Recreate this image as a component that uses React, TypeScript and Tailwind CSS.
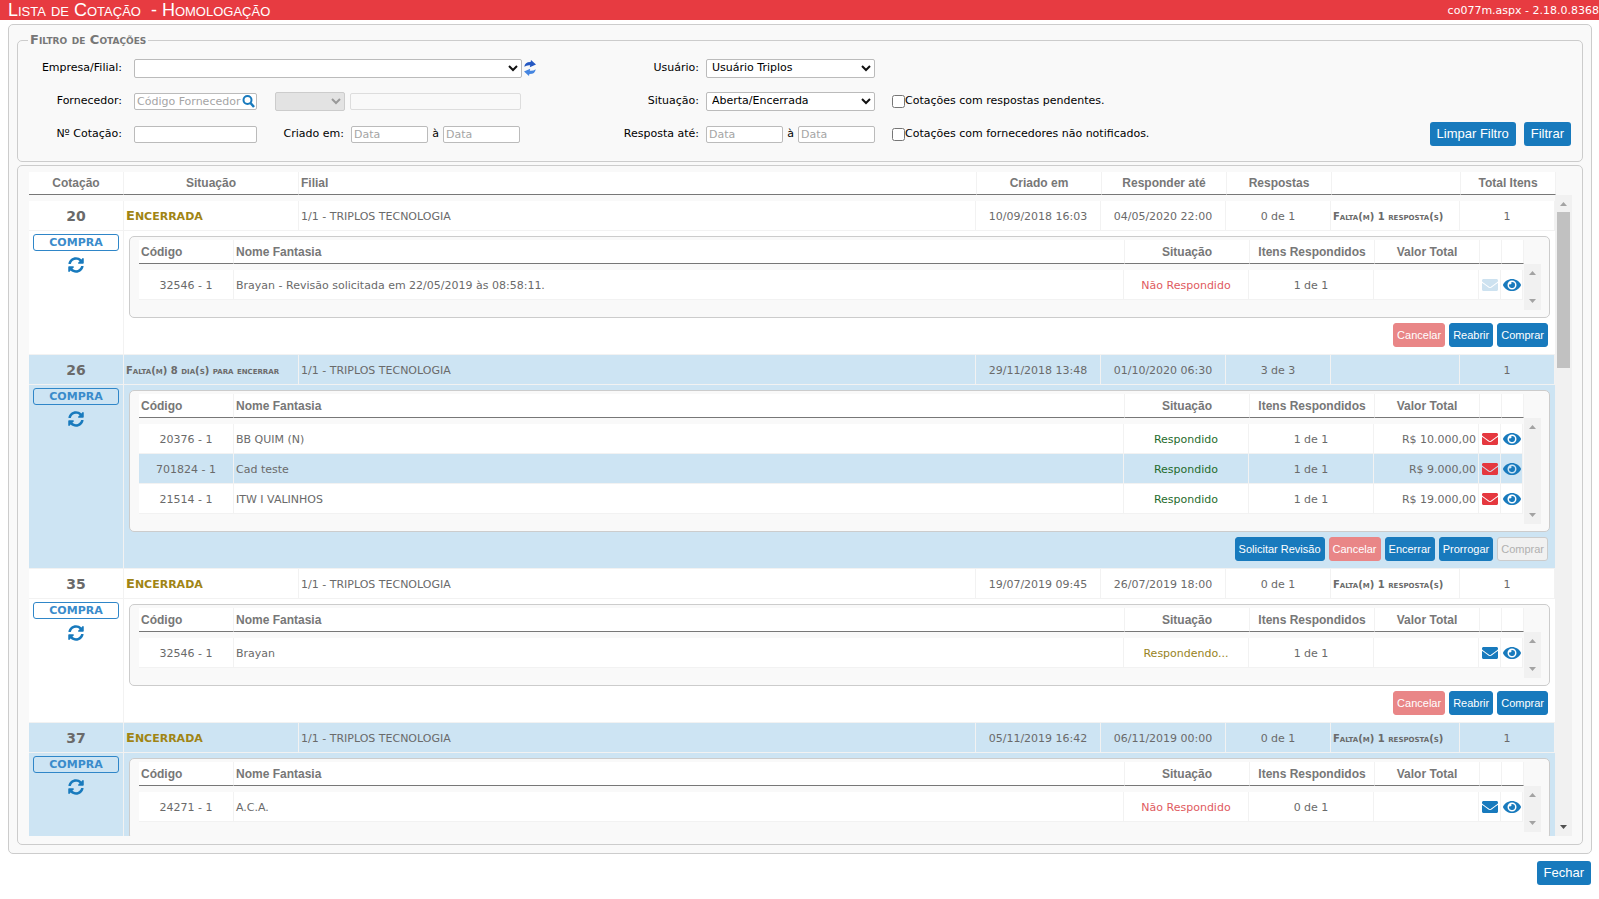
import { useState } from "react"
import type { ReactNode } from "react"
import { FaEnvelope, FaEye, FaSyncAlt } from "react-icons/fa"

type Tone = "primary" | "danger" | "disabled"

interface Fornecedor {
  codigo: string
  nome: string
  situacao: "Não Respondido" | "Respondido" | "Respondendo..."
  itens: string
  valor?: string
  email: "off" | "sent" | "ready"
}

interface Cotacao {
  id: number
  situacao: string
  criado: string
  responder: string
  respostas: string
  falta?: string
  fornecedores: Fornecedor[]
  acoes: { label: string; tone: Tone }[]
}

const acoesEncerrada: Cotacao["acoes"] = [
  { label: "Cancelar", tone: "danger" },
  { label: "Reabrir", tone: "primary" },
  { label: "Comprar", tone: "primary" },
]

const cotacoes: Cotacao[] = [
  {
    id: 20,
    situacao: "Encerrada",
    criado: "10/09/2018 16:03",
    responder: "04/05/2020 22:00",
    respostas: "0 de 1",
    falta: "Falta(m) 1 resposta(s)",
    fornecedores: [
      {
        codigo: "32546 - 1",
        nome: "Brayan - Revisão solicitada em 22/05/2019 às 08:58:11.",
        situacao: "Não Respondido",
        itens: "1 de 1",
        email: "off",
      },
    ],
    acoes: acoesEncerrada,
  },
  {
    id: 26,
    situacao: "Falta(m) 8 dia(s) para encerrar",
    criado: "29/11/2018 13:48",
    responder: "01/10/2020 06:30",
    respostas: "3 de 3",
    fornecedores: [
      { codigo: "20376 - 1", nome: "BB QUIM (N)", situacao: "Respondido", itens: "1 de 1", valor: "R$ 10.000,00", email: "sent" },
      { codigo: "701824 - 1", nome: "Cad teste", situacao: "Respondido", itens: "1 de 1", valor: "R$ 9.000,00", email: "sent" },
      { codigo: "21514 - 1", nome: "ITW I VALINHOS", situacao: "Respondido", itens: "1 de 1", valor: "R$ 19.000,00", email: "sent" },
    ],
    acoes: [
      { label: "Solicitar Revisão", tone: "primary" },
      { label: "Cancelar", tone: "danger" },
      { label: "Encerrar", tone: "primary" },
      { label: "Prorrogar", tone: "primary" },
      { label: "Comprar", tone: "disabled" },
    ],
  },
  {
    id: 35,
    situacao: "Encerrada",
    criado: "19/07/2019 09:45",
    responder: "26/07/2019 18:00",
    respostas: "0 de 1",
    falta: "Falta(m) 1 resposta(s)",
    fornecedores: [
      { codigo: "32546 - 1", nome: "Brayan", situacao: "Respondendo...", itens: "1 de 1", email: "ready" },
    ],
    acoes: acoesEncerrada,
  },
  {
    id: 37,
    situacao: "Encerrada",
    criado: "05/11/2019 16:42",
    responder: "06/11/2019 00:00",
    respostas: "0 de 1",
    falta: "Falta(m) 1 resposta(s)",
    fornecedores: [
      { codigo: "24271 - 1", nome: "A.C.A.", situacao: "Não Respondido", itens: "0 de 1", email: "ready" },
    ],
    acoes: [],
  },
]

const toneClass: Record<Tone, string> = {
  primary: "border-[#187abd] bg-[#187abd] text-white",
  danger: "border-[#e98687] bg-[#e98687] text-white",
  disabled: "border-[#cccccc] bg-[#f1f1f1] text-[#b0b0b0]",
}

const situacaoClass: Record<Fornecedor["situacao"], string> = {
  "Não Respondido": "text-[#e05a60]",
  Respondido: "text-[#1f6b2c]",
  "Respondendo...": "text-[#988323]",
}

const emailClass: Record<Fornecedor["email"], string> = {
  off: "text-[#cde2f0]",
  sent: "text-[#e5383f]",
  ready: "text-[#187abd]",
}

const arial = "font-['Liberation_Sans',Arial,sans-serif]"
const field = "h-[17px] rounded-xs border border-[#bbbbbb] bg-white px-0.5 text-[11px] text-black placeholder:text-[#a5a5a5]"
const label = "pr-3 text-right"

function ReloadArrows() {
  return (
    <svg viewBox="0 0 12 16" className="h-4 w-3" fill="#2458c2" aria-hidden="true">
      <path d="M0.3 6.8 Q0.8 1.8 6.6 1.9 L7 0 L12 4.4 L5.8 7.2 L6.2 5.2 Q2.8 4.8 0.3 6.8z" />
      <path d="M11.7 9.2 Q11.2 14.2 5.4 14.1 L5 16 L0 11.6 L6.2 8.8 L5.8 10.8 Q9.2 11.2 11.7 9.2z" fill="#4585e0" />
    </svg>
  )
}

function Arrow({ down = false, dark = false }: { down?: boolean; dark?: boolean }) {
  return (
    <svg viewBox="0 0 7 4" className="h-1 w-[7px]" fill={dark ? "#505050" : "#a3a3a3"} aria-hidden="true">
      <path d={down ? "M0 0h7L3.5 4z" : "M0 4h7L3.5 0z"} />
    </svg>
  )
}

function Select({ id, className, disabled, children }: { id: string; className: string; disabled?: boolean; children?: ReactNode }) {
  return (
    <div className={`relative ${className}`}>
      <select
        id={id}
        disabled={disabled}
        aria-label={id}
        className={`block h-[19px] w-full appearance-none rounded-xs border pl-[5px] text-[11px] ${
          disabled ? "border-[#cccccc] bg-[#e3e3e3]" : "border-[#bbbbbb] bg-white text-black"
        }`}
      >
        {children}
      </select>
      <svg viewBox="0 0 10 7" className="pointer-events-none absolute top-1.5 right-1 h-[7px] w-2.5" aria-hidden="true">
        <path d="M1 1 L5 5 L9 1" fill="none" stroke={disabled ? "#999999" : "#111111"} strokeWidth="2" />
      </svg>
    </div>
  )
}

function SmallButton({ label, tone }: { label: string; tone: Tone }) {
  return (
    <button disabled={tone === "disabled"} className={`h-6 rounded-[3px] border px-[3px] text-[11px] ${arial} ${toneClass[tone]}`}>
      {label}
    </button>
  )
}

function BigButton({ children }: { children: ReactNode }) {
  return <button className={`h-6 rounded-[3px] bg-[#187abd] px-[7px] text-[13px] text-white ${arial}`}>{children}</button>
}

const th = "border-r border-r-[#f2f2f2] border-b border-b-[#777777] bg-white"
const cell = "border-r border-b border-[#f2f2f2]"

function FornecedorCols() {
  return (
    <colgroup>
      <col className="w-[95px]" />
      <col />
      <col className="w-[125px]" />
      <col className="w-[125px]" />
      <col className="w-[105px]" />
      <col className="w-[22px]" />
      <col className="w-[22px]" />
    </colgroup>
  )
}

function Fornecedores({ rows }: { rows: Fornecedor[] }) {
  return (
    <div className="mx-[5px] mt-[5px] rounded-[5px] border border-[#cccccc] bg-[#f9f9f9] pt-[3px] pr-2 pb-[7px] pl-[9px]">
      <div className="pr-[17px]">
        <table className="w-full table-fixed border-separate border-spacing-0">
          <FornecedorCols />
          <thead>
            <tr className={`h-6 text-xs text-[#777777] ${arial}`}>
              <th className={`${th} pl-0.5 text-left`}>Código</th>
              <th className={`${th} pl-0.5 text-left`}>Nome Fantasia</th>
              <th className={th}>Situação</th>
              <th className={th}>Itens Respondidos</th>
              <th className={th}>Valor Total</th>
              <th className={th}></th>
              <th className={th}></th>
            </tr>
          </thead>
        </table>
      </div>
      <div className="flex">
        <div className="min-w-0 flex-1 pt-1.5 pr-px pb-2.5">
          <table className="w-full table-fixed border-separate border-spacing-0">
            <FornecedorCols />
            <tbody>
              {rows.map((f, i) => (
                <tr key={f.codigo} className={`h-[30px] ${i % 2 ? "bg-[#cde4f3]" : "bg-white"}`}>
                  <td className={`${cell} pt-0.5 text-center`}>{f.codigo}</td>
                  <td className={`${cell} pt-0.5 pl-0.5`}>{f.nome}</td>
                  <td className={`${cell} pt-0.5 text-center ${situacaoClass[f.situacao]}`}>{f.situacao}</td>
                  <td className={`${cell} pt-0.5 text-center`}>{f.itens}</td>
                  <td className={`${cell} pt-0.5 pr-0.5 text-right`}>{f.valor}</td>
                  <td className={cell}>
                    <button aria-label="Enviar e-mail" className={`mx-auto block ${emailClass[f.email]}`}>
                      <FaEnvelope size={16} />
                    </button>
                  </td>
                  <td className={cell}>
                    <button aria-label="Visualizar" className="mx-auto block text-[#187abd]">
                      <FaEye size={18} />
                    </button>
                  </td>
                </tr>
              ))}
            </tbody>
          </table>
        </div>
        <div className="flex w-[17px] flex-col items-center justify-between bg-[#f1f1f1] py-[7px]">
          <Arrow />
          <Arrow down />
        </div>
      </div>
    </div>
  )
}

function CotacaoCols() {
  return (
    <colgroup>
      <col className="w-[95px]" />
      <col className="w-[175px]" />
      <col />
      <col className="w-[125px]" />
      <col className="w-[125px]" />
      <col className="w-[105px]" />
      <col className="w-[129px]" />
      <col className="w-[95px]" />
    </colgroup>
  )
}

function CotacaoRows({ c, odd }: { c: Cotacao; odd: boolean }) {
  const bg = odd ? "bg-[#cde4f3]" : "bg-white"
  return (
    <tbody className={bg}>
      <tr className="h-[30px]">
        <td className={`${cell} text-center text-sm font-bold`}>{c.id}</td>
        <td className={`${cell} pt-0.5 pl-0.5 font-bold whitespace-nowrap`}>
          {c.situacao === "Encerrada" ? (
            <span className="block text-[11px] text-[#a08414] uppercase first-letter:text-[13px]">{c.situacao}</span>
          ) : (
            <span className="block text-[10px] [font-variant:small-caps]">{c.situacao}</span>
          )}
        </td>
        <td className={`${cell} pt-0.5 pl-0.5`}>1/1 - TRIPLOS TECNOLOGIA</td>
        <td className={`${cell} pt-0.5 text-center`}>{c.criado}</td>
        <td className={`${cell} pt-0.5 text-center`}>{c.responder}</td>
        <td className={`${cell} pt-0.5 text-center`}>{c.respostas}</td>
        <td className={`${cell} pt-0.5 pl-0.5 text-[10px] font-bold whitespace-nowrap [font-variant:small-caps]`}>{c.falta}</td>
        <td className={`${cell} pt-0.5 text-center`}>1</td>
      </tr>
      <tr>
        <td className={`${cell} px-1 pt-[3px] align-top`}>
          <div className="flex flex-col items-center gap-1.5">
            <span className="block h-[17px] w-full rounded-[3px] border border-[#2f86c8] text-center text-[11px] leading-[15px] font-bold text-[#3a8bcb]">
              COMPRA
            </span>
            <button aria-label="Atualizar" className="text-[#187abd]">
              <FaSyncAlt size={16} />
            </button>
          </div>
        </td>
        <td colSpan={7} className="border-b border-[#f2f2f2] align-top">
          <Fornecedores rows={c.fornecedores} />
          <div className="flex justify-end gap-1 pt-[5px] pr-[7px] pb-[7px]">
            {c.acoes.map((a) => (
              <SmallButton key={a.label} label={a.label} tone={a.tone} />
            ))}
          </div>
        </td>
      </tr>
    </tbody>
  )
}

export default function App() {
  const [pendentes, setPendentes] = useState(false)
  const [naoNotificados, setNaoNotificados] = useState(false)

  return (
    <div className="flex h-screen flex-col bg-white font-['DejaVu_Sans',Verdana,sans-serif] text-[11px] leading-4 text-[#6a6a6a]">
      <header className="flex h-5 shrink-0 items-center justify-between bg-[#e73b41] pl-2 text-white">
        <h1 className={`text-lg leading-5 whitespace-pre [font-variant:small-caps] ${arial}`}>{"Lista de Cotação  - Homologação"}</h1>
        <span className="pt-0.5">co077m.aspx - 2.18.0.8368</span>
      </header>

      <main className="mt-1 mr-[7px] ml-2 flex min-h-0 flex-1 flex-col rounded-[5px] border border-[#cccccc] bg-[#f9f9f9] px-2 pt-[7px] pb-2">
        {/* Filtro */}
        <fieldset className="flex shrink-0 items-start rounded-[5px] border border-[#cccccc] pr-[11px] pb-[15px] text-black">
          <legend className="ml-2.5 px-0.5 text-[13px] leading-4 font-bold text-[#777777] [font-variant:small-caps]">Filtro de Cotações</legend>
          <div className="flex flex-col gap-[13px] pt-2.5 pb-0.5">
            <div className="flex h-5 items-center">
              <label htmlFor="empresa" className={`${label} w-[116px]`}>Empresa/Filial:</label>
              <Select id="empresa" className="w-[388px]" />
              <button aria-label="Recarregar" className="ml-0.5">
                <ReloadArrows />
              </button>
            </div>
            <div className="flex h-5 items-center">
              <label htmlFor="fornecedor" className={`${label} w-[116px]`}>Fornecedor:</label>
              <div className="relative">
                <input id="fornecedor" placeholder="Código Fornecedor" className={`${field} block w-[123px]`} />
                <svg viewBox="0 0 13 13" className="absolute top-0.5 right-0.5 h-[13px] w-[13px]" fill="none" stroke="#187abd" aria-hidden="true">
                  <circle cx="5.5" cy="5" r="4" strokeWidth="2" />
                  <path d="M8.5 8 L12 12" strokeWidth="2.5" />
                </svg>
              </div>
              <Select id="tipo" className="ml-[18px] w-[70px]" disabled />
              <input disabled aria-label="Nome do fornecedor" className="ml-[5px] h-[17px] w-[171px] rounded-xs border border-[#dddddd] bg-[#f9f9f9]" />
            </div>
            <div className="flex h-5 items-center">
              <label htmlFor="numero" className={`${label} w-[116px]`}>Nº Cotação:</label>
              <input id="numero" className={`${field} w-[123px]`} />
              <label htmlFor="criado" className="w-[94px] pr-[7px] text-right">Criado em:</label>
              <input id="criado" placeholder="Data" className={`${field} w-[77px]`} />
              <label htmlFor="criadoAte" className="w-[15px] text-center">à</label>
              <input id="criadoAte" placeholder="Data" className={`${field} w-[77px]`} />
            </div>
          </div>

          <div className="ml-[84px] flex flex-col gap-[13px] pt-2.5 pb-0.5">
            <div className="flex h-5 items-center">
              <label htmlFor="usuario" className="w-[86px] pr-[7px] text-right">Usuário:</label>
              <Select id="usuario" className="w-[169px]">
                <option>Usuário Triplos</option>
              </Select>
            </div>
            <div className="flex h-5 items-center">
              <label htmlFor="situacao" className="w-[86px] pr-[7px] text-right">Situação:</label>
              <Select id="situacao" className="w-[169px]">
                <option>Aberta/Encerrada</option>
              </Select>
              <label className="ml-[17px] flex items-center">
                <input type="checkbox" checked={pendentes} onChange={(e) => setPendentes(e.target.checked)} className="size-[13px]" />
                Cotações com respostas pendentes.
              </label>
            </div>
            <div className="flex h-5 items-center">
              <label htmlFor="resposta" className="w-[86px] pr-[7px] text-right">Resposta até:</label>
              <input id="resposta" placeholder="Data" className={`${field} w-[77px]`} />
              <label htmlFor="respostaAte" className="w-[15px] text-center">à</label>
              <input id="respostaAte" placeholder="Data" className={`${field} w-[77px]`} />
              <label className="ml-[17px] flex items-center">
                <input type="checkbox" checked={naoNotificados} onChange={(e) => setNaoNotificados(e.target.checked)} className="size-[13px]" />
                Cotações com fornecedores não notificados.
              </label>
            </div>
          </div>

          <div className="ml-auto flex gap-2 self-end">
            <BigButton>Limpar Filtro</BigButton>
            <BigButton>Filtrar</BigButton>
          </div>
        </fieldset>

        {/* Lista */}
        <section className="mt-[3px] flex min-h-0 flex-1 flex-col rounded-[5px] border border-[#cccccc] pt-1.5 pr-2.5 pb-2 pl-[11px]">
          <div className="pr-4">
            <table className="w-full table-fixed border-separate border-spacing-0">
              <CotacaoCols />
              <thead>
                <tr className={`h-[23px] text-xs text-[#777777] ${arial}`}>
                  <th className={th}>Cotação</th>
                  <th className={th}>Situação</th>
                  <th className={`${th} pl-0.5 text-left`}>Filial</th>
                  <th className={th}>Criado em</th>
                  <th className={th}>Responder até</th>
                  <th className={th}>Respostas</th>
                  <th className={th}></th>
                  <th className={th}>Total Itens</th>
                </tr>
              </thead>
            </table>
          </div>
          <div className="flex min-h-0 flex-1">
            <div className="min-w-0 flex-1 overflow-hidden pt-1.5">
              <table className="w-full table-fixed border-separate border-spacing-0">
                <CotacaoCols />
                {cotacoes.map((c, i) => (
                  <CotacaoRows key={c.id} c={c} odd={i % 2 === 1} />
                ))}
              </table>
            </div>
            <div className="flex w-[17px] shrink-0 flex-col items-center bg-[#f1f1f1] py-[7px]">
              <Arrow />
              <div className="mt-1.5 h-[156px] w-[13px] bg-[#c1c1c1]" />
              <div className="mt-auto">
                <Arrow down dark />
              </div>
            </div>
          </div>
        </section>
      </main>

      <footer className="flex shrink-0 justify-end px-2 pt-[7px] pb-3.5">
        <BigButton>Fechar</BigButton>
      </footer>
    </div>
  )
}
